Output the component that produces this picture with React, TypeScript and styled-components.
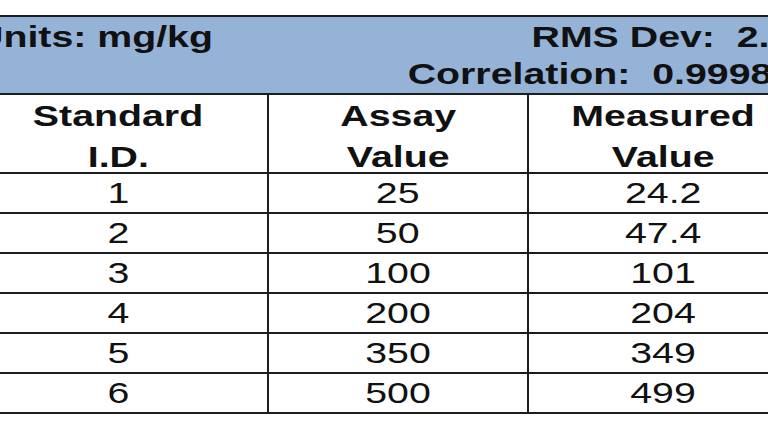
import styled, { createGlobalStyle } from "styled-components";

const GlobalStyle = createGlobalStyle`
  html, body {
    margin: 0;
    padding: 0;
    background: #fff;
    overflow: hidden;
  }
  body {
    font-family: "Liberation Sans", Arial, sans-serif;
    color: #111;
  }
`;

const Page = styled.div`
  width: 768px;
  height: 432px;
  padding-top: 15px;
  box-sizing: border-box;
  overflow: hidden;
`;

const Table = styled.table`
  margin-left: -31px;
  width: 829px;
  table-layout: fixed;
  border-collapse: separate;
  border-spacing: 0;
  border-top: 2px solid #1d1d1d;
`;

const Band = styled.td`
  background: #95b3d7;
  border-bottom: 2px solid #1d1d1d;
  height: 78px;
  box-sizing: border-box;
  padding: 1px 0 0;
  vertical-align: top;
`;

const BandLine = styled.div<{ $align: "between" | "end"; $right: number }>`
  display: flex;
  justify-content: ${(p) => (p.$align === "between" ? "space-between" : "flex-end")};
  height: 37px;
  line-height: 37px;
  padding-left: 6px;
  padding-right: ${(p) => p.$right}px;
  font-size: 30px;
  font-weight: 700;
  white-space: pre;
`;

const Stretch = styled.span<{ $origin: "left" | "center" | "right" }>`
  display: inline-block;
  white-space: pre;
  transform: scaleX(1.31);
  transform-origin: ${(p) => p.$origin} center;
`;

const HeadCell = styled.th<{ $last?: boolean }>`
  height: 79px;
  box-sizing: border-box;
  padding: 0;
  vertical-align: top;
  text-align: center;
  font-size: 30px;
  font-weight: 700;
  border-bottom: 2px solid #1d1d1d;
  border-right: ${(p) => (p.$last ? "none" : "2px solid #1d1d1d")};
`;

const HeadLabel = styled.div`
  height: 77px;
  line-height: 41px;
`;

const Cell = styled.td<{ $last?: boolean }>`
  height: 40px;
  box-sizing: border-box;
  padding: 0;
  text-align: center;
  vertical-align: top;
  line-height: 38px;
  font-size: 30px;
  font-weight: 400;
  border-bottom: 2px solid #1d1d1d;
  border-right: ${(p) => (p.$last ? "none" : "2px solid #1d1d1d")};
`;

const rows = [
  { id: "1", assay: "25", measured: "24.2" },
  { id: "2", assay: "50", measured: "47.4" },
  { id: "3", assay: "100", measured: "101" },
  { id: "4", assay: "200", measured: "204" },
  { id: "5", assay: "350", measured: "349" },
  { id: "6", assay: "500", measured: "499" },
];

const headers = [
  ["Standard", "I.D."],
  ["Assay", "Value"],
  ["Measured", "Value"],
];

export default function App() {
  return (
    <>
      <GlobalStyle />
      <Page>
        <Table>
          <colgroup>
            <col style={{ width: 300 }} />
            <col style={{ width: 260 }} />
            <col style={{ width: 269 }} />
          </colgroup>
          <thead>
            <tr>
              <Band colSpan={3}>
                <BandLine $align="between" $right={7}>
                  <Stretch $origin="left">Units: mg/kg</Stretch>
                  <Stretch $origin="right">RMS Dev:  2.1</Stretch>
                </BandLine>
                <BandLine $align="end" $right={26}>
                  <Stretch $origin="right">Correlation:  0.9998</Stretch>
                </BandLine>
              </Band>
            </tr>
            <tr>
              {headers.map((h, i) => (
                <HeadCell key={i} $last={i === headers.length - 1}>
                  <HeadLabel>
                    <Stretch $origin="center">{h[0]}</Stretch>
                    <br />
                    <Stretch $origin="center">{h[1]}</Stretch>
                  </HeadLabel>
                </HeadCell>
              ))}
            </tr>
          </thead>
          <tbody>
            {rows.map((r) => (
              <tr key={r.id}>
                <Cell>
                  <Stretch $origin="center">{r.id}</Stretch>
                </Cell>
                <Cell>
                  <Stretch $origin="center">{r.assay}</Stretch>
                </Cell>
                <Cell $last>
                  <Stretch $origin="center">{r.measured}</Stretch>
                </Cell>
              </tr>
            ))}
          </tbody>
        </Table>
      </Page>
    </>
  );
}
